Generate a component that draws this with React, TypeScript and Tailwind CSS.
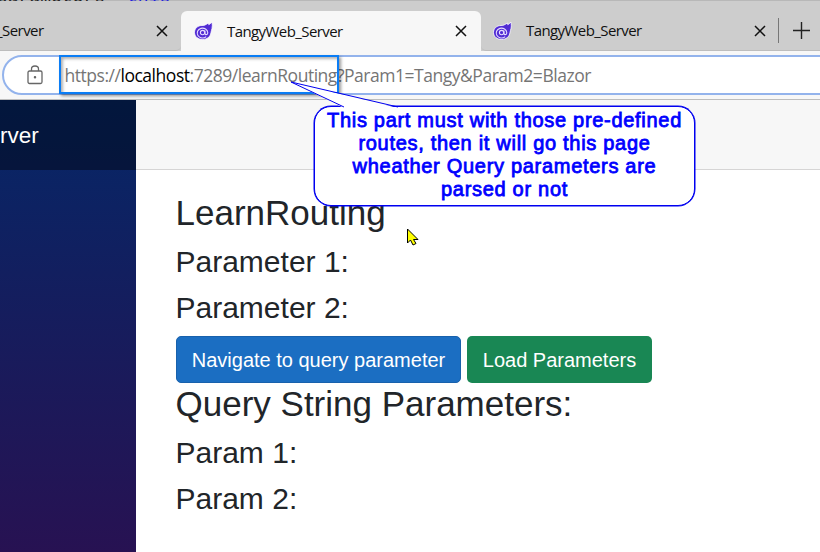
import React from "react";

const uiFont = "font-['Open_Sans','Noto_Sans',sans-serif]";

function Flame() {
  return (
    <svg className="size-[22px] shrink-0" viewBox="0 0 22 22" fill="none">
      <path d="M19 2.200c.3 2 .5 4.300 0 6.300-.3 1.500-.8 2.500-1 4C17.400 16.800 14 19.500 9.800 19.500 5 19.500 1.500 16.600 1.500 12.500 1.500 8.300 4.800 5.500 9 5.500c1.300 0 2.300-.1 3.200-.6L15.500 3l.3 1.700L19 2.200Z" fill="#512bd4" stroke="#fff" strokeWidth=".8" />
      <path d="M13.200 16.600A5.300 4.900 0 1 1 14.800 12.800c0 2.400-2.900 2.300-2.900.3v-2.500" stroke="#e6dcff" strokeWidth="1.100" />
      <circle cx="9.600" cy="12.600" r="2.200" stroke="#e6dcff" strokeWidth="1.100" />
    </svg>
  );
}

function Close() {
  return (
    <svg className="size-[12px] shrink-0" viewBox="0 0 12 12">
      <path d="m1 1 10 10M11 1 1 11" stroke="#111" strokeWidth="1.500" />
    </svg>
  );
}

function TabStrip() {
  return (
    <div className={`flex h-[50px] bg-[#cdcdcd] text-[15px] text-[#111] ${uiFont}`}>
      <div className="flex w-[181px] items-center justify-between rounded-br-[5px] border-b border-[#bdbdbd] pt-[10px] pr-[13px]">
        <span className="-ml-[4px] tracking-[-0.55px]">_Server</span>
        <Close />
      </div>
      <div className="mt-[10px] flex w-[300px] items-center rounded-t-[6px] bg-[#f7f7f7] pl-[12px] pr-[14px]">
        <Flame />
        <span className="ml-[12px] grow tracking-[-0.58px]">TangyWeb_Server</span>
        <Close />
      </div>
      <div className="flex w-[298px] items-center rounded-bl-[5px] border-b border-[#bdbdbd] pl-[11px] pr-[13px] pt-[10px]">
        <Flame />
        <span className="ml-[12px] grow tracking-[-0.58px]">TangyWeb_Server</span>
        <Close />
      </div>
      <div className="flex grow items-center border-b border-[#bdbdbd] pt-[10px]">
        <div className="-ml-[1px] h-[25px] w-px bg-[#777]" />
        <svg className="ml-[13px] size-[19px]" viewBox="0 0 19 19">
          <path d="M9.500 1v17M1 9.500h17" stroke="#222" strokeWidth="1.400" />
        </svg>
      </div>
    </div>
  );
}

function AddressBar() {
  return (
    <div className="h-[49px] border-b border-[#bdbdbd] bg-[#f7f7f7] pl-[2px] pt-[4px]">
      <div className="flex h-[40px] w-[840px] items-center rounded-l-full border-[2px] border-[#93b3ec] bg-white pl-[23px]">
        <svg className="h-[20px] w-[16px] shrink-0" viewBox="0 0 16 20" fill="none" stroke="#666" strokeWidth="1.300">
          <rect x="1" y="6" width="14" height="12.500" rx="1.500" />
          <path d="M4.500 6V4a3.500 3 0 0 1 7 0v2" />
          <circle cx="8" cy="12.200" r=".6" fill="#555" />
        </svg>
        <span className={`ml-[21.500px] whitespace-pre text-[17.500px] tracking-[-0.47px] text-[#757575] ${uiFont}`}>
          https://<span className="text-black">localhost</span>:7289/learnRouting?Param1=Tangy&amp;Param2=Blazor
        </span>
      </div>
    </div>
  );
}

export default function App() {
  return (
    <div className="relative h-[552px] w-[820px] overflow-hidden bg-white font-['Liberation_Sans',Arial,sans-serif]">
      <div className="flex h-px items-end overflow-hidden whitespace-pre bg-[#b8b8b8] font-['Liberation_Mono',monospace] text-[18px] leading-[8px] text-[#222]">
        <span className="-ml-[3px]">parameters</span>
        <span className="ml-[22px] text-[#2020dd]">this</span>
      </div>
      <TabStrip />
      <AddressBar />
      <div className="flex h-[452px]">
        <aside className="w-[136px] shrink-0 bg-[linear-gradient(180deg,#052767_0px,#3a0647_700px)]">
          <div className="flex h-[70px] items-center bg-black/40 pt-px text-[22.500px] text-white">
            <span>rver</span>
          </div>
        </aside>
        <main className="grow text-[#212529]">
          <div className="h-[70px] border-b border-[#d6d5d5] bg-[#f7f7f7]" />
          <div className="pl-[39.500px] pt-[22px]">
            <h3 className="mb-[10px] text-[35px] leading-[42px]">LearnRouting</h3>
            <h4 className="mb-[10px] text-[30px] leading-[36px]">Parameter 1:</h4>
            <h4 className="mb-[10px] text-[30px] leading-[36px]">Parameter 2:</h4>
            <div className="ml-[0.500px] flex gap-[6px] text-[20px] text-white">
              <button className="h-[47px] w-[285px] rounded-[5px] border border-[#1861ac] bg-[#1b6ec2]">Navigate to query parameter</button>
              <button className="h-[47px] w-[185px] rounded-[5px] bg-[#198754]">Load Parameters</button>
            </div>
            <h3 className="mb-[10px] text-[35px] leading-[42px]">Query String Parameters:</h3>
            <h4 className="mb-[10px] text-[30px] leading-[36px]">Param 1:</h4>
            <h4 className="text-[30px] leading-[36px]">Param 2:</h4>
          </div>
        </main>
      </div>

      <div className="absolute left-[59px] top-[55px] h-[39px] w-[280px] border-[2px] border-[#0a7df5] shadow-[2px_2px_3px_rgba(0,0,0,0.4),inset_2px_2px_3px_rgba(0,0,0,0.3)]" />

      <div className="absolute left-[314px] top-[106px] h-[100px] w-[381px] rounded-[17px] border border-[#0000f0] bg-white pt-[2px] text-center text-[20px] leading-[23px] tracking-[0.7px] text-[#0000ff] shadow-[0_0_0_0.5px_#0000f0] [-webkit-text-stroke:0.8px_#0000ff]">
        <div>This part must with those pre-defined</div>
        <div>routes, then it will go this page</div>
        <div>wheather Query parameters are</div>
        <div>parsed or not</div>
      </div>
      <svg className="absolute left-[285px] top-[78px] h-[32px] w-[120px]" viewBox="0 0 120 32">
        <path d="M59 30 6 4l107 26Z" fill="#fff" />
        <path d="M59 29 6 4l107 25" fill="none" stroke="#0000f0" strokeWidth="1" />
      </svg>
      <svg className="absolute left-[406px] top-[228px] h-[19px] w-[14px]" viewBox="0 0 14 19">
        <path d="M1.500 1v14l3-3 2.500 5 3-1.500-2.500-4h4.500Z" fill="#ff0" stroke="#000" />
      </svg>
    </div>
  );
}
